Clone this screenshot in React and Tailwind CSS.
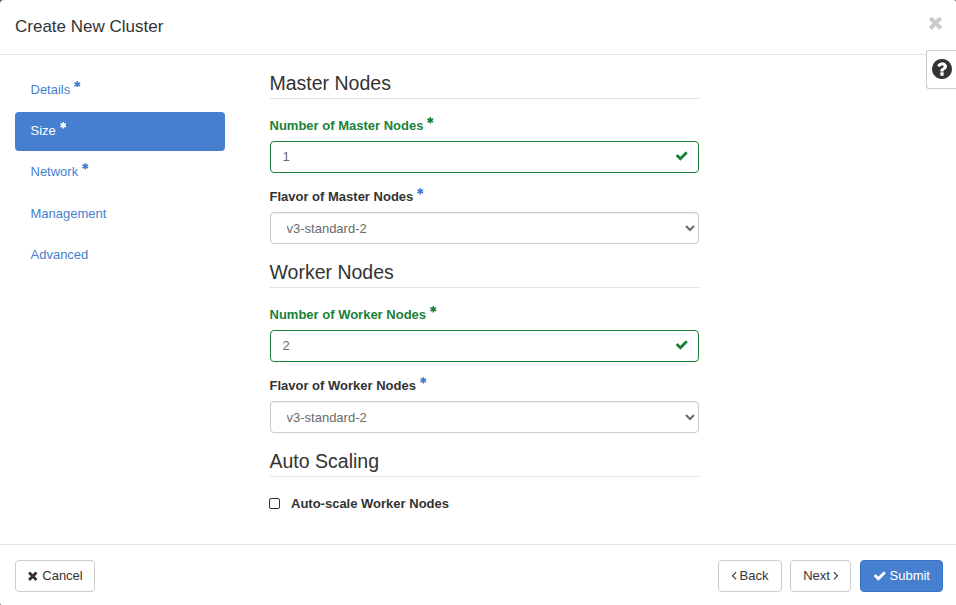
import React from "react";

const PATHS = {
  check:
    "M1671 566q0 40-28 68l-724 724-136 136q-28 28-68 28t-68-28l-136-136-362-362q-28-28-28-68t28-68l136-136q28-28 68-28t68 28l294 295 656-657q28-28 68-28t68 28l136 136q28 28 28 68z",
  times:
    "M1490 1322q0 40-28 68l-136 136q-28 28-68 28t-68-28l-294-294-294 294q-28 28-68 28t-68-28l-136-136q-28-28-28-68t28-68l294-294-294-294q-28-28-28-68t28-68l136-136q28-28 68-28t68 28l294 294 294-294q28-28 68-28t68 28l136 136q28 28 28 68t-28 68l-294 294 294 294q28 28 28 68z",
  asterisk:
    "M1546 1050q46 26 59.5 77.5t-12.5 97.5l-64 110q-26 46-77.5 59.5t-97.5-12.5l-266-153v307q0 52-38 90t-90 38h-128q-52 0-90-38t-38-90v-307l-266 153q-46 26-97.5 12.5t-77.5-59.5l-64-110q-26-46-12.5-97.5t59.5-77.5l266-154-266-154q-46-26-59.5-77.5t12.5-97.5l64-110q26-46 77.5-59.5t97.5 12.5l266 153v-307q0-52 38-90t90-38h128q52 0 90 38t38 90v307l266-153q46-26 97.5-12.5t77.5 59.5l64 110q26 46 12.5 97.5t-59.5 77.5l-266 154z",
  left: "M1203 544q0 13-10 23l-393 393 393 393q10 10 10 23t-10 23l-50 50q-10 10-23 10t-23-10l-466-466q-10-10-10-23t10-23l466-466q10-10 23-10t23 10l50 50q10 10 10 23z",
  right:
    "M1171 960q0 13-10 23l-466 466q-10 10-23 10t-23-10l-50-50q-10-10-10-23t10-23l393-393-393-393q-10-10-10-23t10-23l50-50q10-10 23-10t23 10l466 466q10 10 10 23z",
  question:
    "M1024 1376v-192q0-14-9-23t-23-9h-192q-14 0-23 9t-9 23v192q0 14 9 23t23 9h192q14 0 23-9t9-23zm256-672q0-88-55.5-163t-138.5-116-170-41q-243 0-371 213-15 24 8 42l132 100q7 6 19 6 16 0 25-12 53-68 86-92 34-24 86-24 48 0 85.5 26t37.5 59q0 38-20 61t-68 45q-63 28-115.5 86.5t-52.5 125.5v36q0 14 9 23t23 9h192q14 0 23-9t9-23q0-19 21.5-49.5t54.5-49.5q32-18 49-28.5t46-35 44.5-48 28-60.5 12.5-81zm384 192q0 209-103 385.5t-279.5 279.5-385.5 103-385.5-103-279.5-279.5-103-385.5 103-385.5 279.5-279.5 385.5-103 385.5 103 279.5 279.5 103 385.5z",
};

function Icon({ name, className, viewBox = "0 0 1792 1792" }) {
  return (
    <svg viewBox={viewBox} className={className} fill="currentColor" aria-hidden="true">
      <path d={PATHS[name]} />
    </svg>
  );
}

function Required({ className = "" }) {
  return <Icon name="asterisk" viewBox="128 128 1536 1536" className={"mb-[11px] ml-1 size-[6.6px] shrink-0 " + className} />;
}

const STEPS = [
  { label: "Details", required: true },
  { label: "Size", required: true, active: true },
  { label: "Network", required: true },
  { label: "Management" },
  { label: "Advanced" },
];

function Steps() {
  return (
    <nav className="flex w-[210px] flex-col gap-[2px] pt-[15.7px]">
      {STEPS.map((s) => (
        <a
          key={s.label}
          className={
            "flex h-[39.3px] shrink-0 items-center rounded-[4px] pl-[15.5px] pb-[1.6px] " +
            (s.active ? "bg-[#467fcf] text-white" : "text-[#467fcf]")
          }
        >
          {s.label}
          {s.required && <Required />}
        </a>
      ))}
    </nav>
  );
}

function Section({ title, children }) {
  return (
    <section>
      <h4 className="flex h-[27px] items-center border-b border-[#e2e2e2] pb-[3px] text-[19.5px] text-[#333]">{title}</h4>
      {children}
    </section>
  );
}

function Label({ children, valid }) {
  return (
    <label className={"flex h-5 items-center font-bold " + (valid ? "text-[#1b8138]" : "text-[#333]")}>
      {children}
      <Required className={valid ? "" : "text-[#467fcf]"} />
    </label>
  );
}

function NodeFields({ kind, count }) {
  return (
    <>
      <div className="pt-[17px]">
        <Label valid>Number of {kind} Nodes</Label>
        <div className="mt-[5px] flex h-8 items-center justify-between rounded-[4px] border border-[#1b8138] pr-[9.5px] pl-3 text-[#6a6a6a]">
          <span>{count}</span>
          <Icon name="check" className="mb-[3px] size-[13.5px] text-[#1b8138]" />
        </div>
      </div>
      <div className="pt-[14px]">
        <Label>Flavor of {kind} Nodes</Label>
        <select className="mt-[5px] block h-8 w-full rounded-[4px] border border-[#ccc] bg-white px-3 text-[13px] text-[#6a6a6a] shadow-[inset_0_1px_1px_rgba(0,0,0,0.075)]">
          <option>v3-standard-2</option>
        </select>
      </div>
    </>
  );
}

function Button({ className = "", children }) {
  return (
    <button className={"flex h-8 items-center justify-center gap-[3px] rounded-[4px] border text-[13px] " + className}>
      {children}
    </button>
  );
}

export default function App() {
  return (
    <div className="h-[605px] w-[956px] overflow-hidden bg-[#555] font-['Liberation_Sans',Arial,sans-serif] text-[13px] text-[#333]">
      <div className="relative flex h-full flex-col rounded-tl-[4px] rounded-tr-[2px] rounded-bl-[2px] bg-white">
        <header className="flex h-[55px] shrink-0 items-center justify-between border-b border-[#e2e2e2] pr-[11.5px] pl-[15px]">
          <h3 className="text-[17px]">Create New Cluster</h3>
          <button className="mb-[10px] text-[#ccc]">
            <Icon name="times" className="size-[19px]" />
          </button>
        </header>
        <main className="flex h-[489px] shrink-0 pl-[15px]">
          <Steps />
          <div className="ml-[44.5px] flex w-[429.5px] flex-col gap-[17px] pt-[17px]">
            <Section title="Master Nodes">
              <NodeFields kind="Master" count="1" />
            </Section>
            <Section title="Worker Nodes">
              <NodeFields kind="Worker" count="2" />
            </Section>
            <Section title="Auto Scaling">
              <label className="flex items-center gap-[11px] pt-[17px] font-bold">
                <span className="-ml-[0.5px] size-[11px] rounded-[2px] border border-[#333] bg-white" />
                Auto-scale Worker Nodes
              </label>
            </Section>
          </div>
        </main>
        <footer className="flex h-[61px] shrink-0 items-center border-t border-[#e2e2e2] pt-[2px] pr-[13px] pl-[15px]">
          <Button className="mr-auto w-20 border-[#ccc] bg-white">
            <Icon name="times" className="mb-[1px] size-[13.5px] -ml-[1px] -mr-[0.5px]" />
            Cancel
          </Button>
          <Button className="w-16 border-[#ccc] bg-white">
            <Icon name="left" viewBox="512 0 768 1792" className="mb-[1px] h-[14.5px] w-[6px] -ml-[1px]" />
            Back
          </Button>
          <Button className="ml-2 w-[61px] border-[#ccc] bg-white">
            Next
            <Icon name="right" viewBox="512 0 768 1792" className="mb-[1px] h-[14.5px] w-[6px] -mr-[1px]" />
          </Button>
          <Button className="ml-[9px] w-[83px] border-[#3a74c8] bg-[#467fcf] text-white">
            <Icon name="check" className="mb-[1px] size-[13.5px]" />
            Submit
          </Button>
        </footer>
        <button className="absolute top-[50px] right-0 flex h-[39px] w-[30px] items-center justify-center rounded-l-[3px] border border-r-0 border-[#ccc] bg-white">
          <Icon name="question" viewBox="128 128 1536 1536" className="mb-[1.5px] ml-[1px] size-5" />
        </button>
      </div>
    </div>
  );
}
